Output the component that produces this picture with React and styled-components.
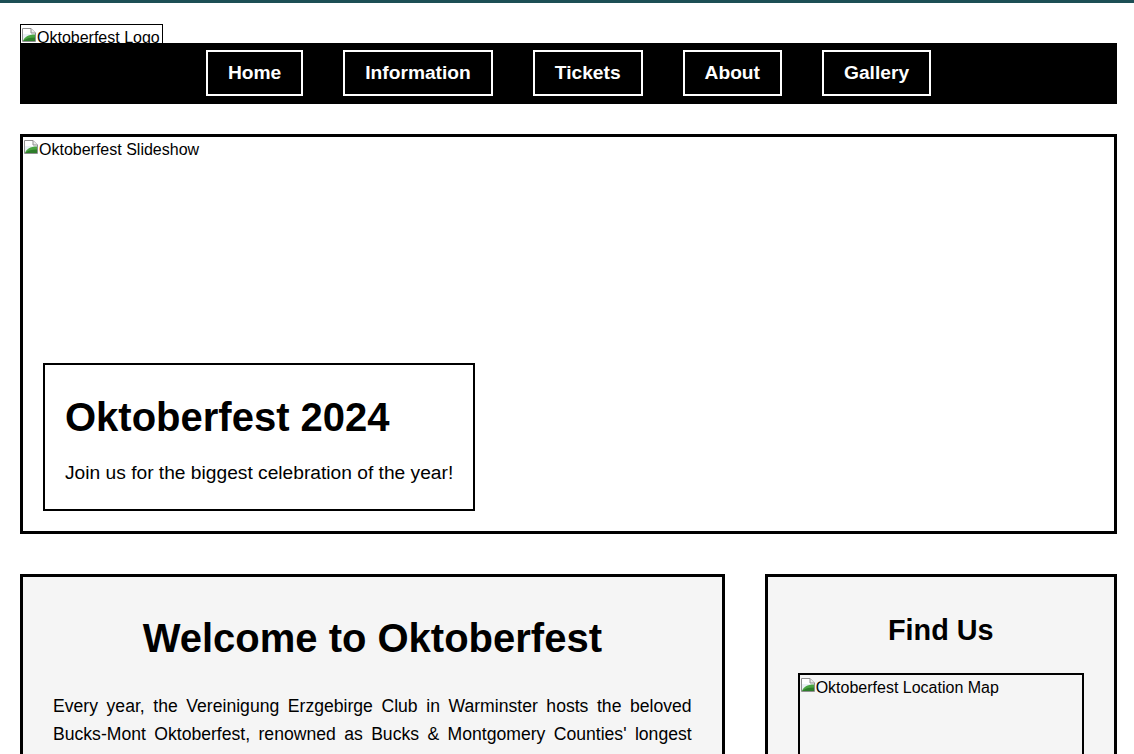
import { createGlobalStyle, styled } from "styled-components";

const GlobalStyle = createGlobalStyle`
  body {
    margin: 0;
    background: #fff;
    color: #000;
    border-top: 3px solid #1c4f55;
    font-family: "Liberation Sans", Arial, Helvetica, sans-serif;
  }
`

const Page = styled.div`
  padding: 21px 17px 40px 20px;
`

// broken-image look (icon + alt text), the site had no pictures loaded
const Broken = styled.span`
  display: flex;
  align-items: flex-start;
  box-sizing: border-box;
  overflow: hidden;
  font-size: 16px;
  color: #000;
`
const BrokenIcon = styled.svg`
  flex: none;
  margin-top: 2px;
`
const AltText = styled.span`
  padding-top: 4px;
  white-space: nowrap;
`

function BrokenImage({ alt, className }) {
  return (
    <Broken className={className}>
      <BrokenIcon width="16" height="16" viewBox="0 0 16 16">
        <path d="M1.5 1.5h8.5l4.5 4.5v8.5h-13z" fill="#fff" stroke="#8f8f8f" />
        <path d="M10 1.5v4.5h4.5" fill="#ececec" stroke="#8f8f8f" />
        <path d="M2 14V7h12v7z" fill="#eaf1f5" />
        <path d="M2 14c1.5-4 5-6.5 12-6.5V14z" fill="#4aa441" />
        <path d="M2 14c3-2.5 6.5-3.5 12-3.5V14z" fill="#2e7d2a" />
      </BrokenIcon>
      <AltText>{alt}</AltText>
    </Broken>
  )
}

const Logo = styled(BrokenImage)`
  width: 143px;
  height: 19px;
  border: 1px solid #000;
  border-bottom: none;
`

const Nav = styled.nav`
  background: #000;
  display: flex;
  justify-content: center;
  gap: 40px;
  padding: 7px 0 8px;
`
const NavButton = styled.a`
  color: #fff;
  border: 2px solid #fff;
  padding: 10px 20px;
  font-size: 19.2px;
  font-weight: bold;
  text-decoration: none;
`

const Hero = styled.section`
  position: relative;
  margin-top: 30px;
  height: 400px;
  box-sizing: border-box;
  border: 3px solid #000;
  background: #fff;
`
const Slide = styled(BrokenImage)`
  width: 100%;
  height: 100%;
`
const HeroCaption = styled.div`
  position: absolute;
  left: 20px;
  bottom: 20px;
  background: #fff;
  border: 2px solid #000;
  padding: 30px 20px 25px;
`
const HeroTitle = styled.h1`
  font-size: 40px;
  margin: 0 0 22px;
`
const HeroText = styled.p`
  font-size: 19.2px;
  margin: 0;
  white-space: nowrap;
`

const Content = styled.div`
  margin-top: 40px;
  display: grid;
  grid-template-columns: 2fr 1fr;
  gap: 40px;
  align-items: start;
`
const Card = styled.section`
  background: #f5f5f5;
  border: 3px solid #000;
  padding: 30px;
`
const CardTitle = styled.h2`
  text-align: center;
  font-size: ${p => p.$size};
  margin: ${p => p.$margin};
`
const Text = styled.p`
  font-size: 17.6px;
  line-height: 1.6;
  text-align: justify;
  margin: 0 0 18px;
`
const Map = styled(BrokenImage)`
  width: 100%;
  height: 300px;
  border: 2px solid #000;
`
const Address = styled.p`
  text-align: center;
  font-size: 17.6px;
  line-height: 1.6;
  margin: 20px 0 0;
`

const links = ["Home", "Information", "Tickets", "About", "Gallery"]

export default function App() {
  return (
    <>
      <GlobalStyle />
      <Page>
        <header>
          <Logo alt="Oktoberfest Logo" />
          <Nav>
            {links.map(l => <NavButton key={l} href="#">{l}</NavButton>)}
          </Nav>
        </header>

        <Hero>
          <Slide alt="Oktoberfest Slideshow" />
          <HeroCaption>
            <HeroTitle>Oktoberfest 2024</HeroTitle>
            <HeroText>Join us for the biggest celebration of the year!</HeroText>
          </HeroCaption>
        </Hero>

        <Content>
          <Card>
            <CardTitle $size="40px" $margin="9px 0 31px">Welcome to Oktoberfest</CardTitle>
            <Text>
              Every year, the Vereinigung Erzgebirge Club in Warminster hosts the beloved
              Bucks-Mont Oktoberfest, renowned as Bucks &amp; Montgomery Counties' longest
              running Oktoberfest celebration. Join us for authentic German food, beer, music
              and dancing in a festive atmosphere the whole family will enjoy.
            </Text>
            <Text>
              Bring your friends, raise a stein and celebrate Gemütlichkeit with live bands,
              traditional costumes and activities for all ages.
            </Text>
          </Card>
          <Card>
            <CardTitle $size="28.8px" $margin="7px 0 26px">Find Us</CardTitle>
            <Map alt="Oktoberfest Location Map" />
            <Address>Vereinigung Erzgebirge, Warminster, PA</Address>
          </Card>
        </Content>
      </Page>
    </>
  )
}
